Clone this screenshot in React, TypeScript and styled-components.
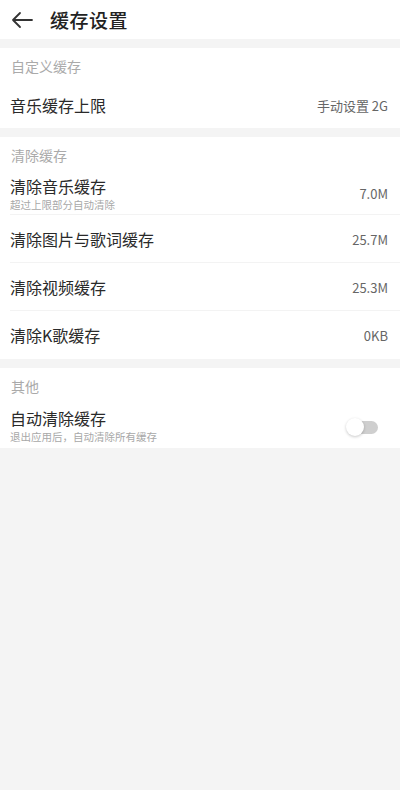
import styled, { createGlobalStyle } from 'styled-components'

const GlobalStyle = createGlobalStyle`
  html, body {
    margin: 0;
    padding: 0;
    background: #f4f4f4;
  }
  body {
    font-family: 'Noto Sans CJK SC', 'Noto Sans', sans-serif;
    -webkit-font-smoothing: antialiased;
  }
`

const Page = styled.div`
  width: 400px;
  min-height: 790px;
  background: #f4f4f4;
  display: flex;
  flex-direction: column;
  gap: 9px;
`

const Header = styled.header`
  height: 39px;
  background: #fff;
  display: flex;
  align-items: center;
  padding-left: 11px;
  gap: 17px;
`

const Title = styled.h1`
  margin: 0;
  font-size: 19px;
  font-weight: 500;
  color: #222;
  letter-spacing: 0.5px;
`

const Section = styled.section`
  background: #fff;
  display: flex;
  flex-direction: column;
`

const SectionLabel = styled.div`
  height: 34px;
  display: flex;
  align-items: center;
  padding: 1px 11px 0;
  font-size: 14px;
  color: #aaa;
  box-sizing: border-box;
`

const Row = styled.div<{ $h: number; $divider?: boolean }>`
  height: ${({ $h }) => $h}px;
  display: flex;
  align-items: center;
  justify-content: space-between;
  padding: 0 12px 0 10px;
  box-sizing: border-box;
  position: relative;
  ${({ $divider }) =>
    $divider
      ? `
    &::after {
      content: '';
      position: absolute;
      left: 10px;
      right: 0;
      bottom: 0;
      height: 1px;
      background: #f3f3f3;
    }
  `
      : ''}
`

const TextCol = styled.div`
  display: flex;
  flex-direction: column;
`

const RowTitle = styled.div`
  font-size: 16px;
  color: #2a2a2a;
  line-height: 22px;
`

const RowSub = styled.div`
  font-size: 10.5px;
  color: #a8a8a8;
  line-height: 15px;
`

const Value = styled.div`
  font-size: 13px;
  color: #666;
`

const Switch = styled.div<{ $on: boolean }>`
  width: 31px;
  height: 13px;
  border-radius: 7px;
  background: ${({ $on }) => ($on ? '#e33' : '#cfcfcf')};
  position: relative;
  margin-right: 10px;
  margin-top: 4px;

  &::before {
    content: '';
    position: absolute;
    top: 50%;
    left: ${({ $on }) => ($on ? '14px' : '-1px')};
    width: 18px;
    height: 18px;
    margin-top: -9px;
    border-radius: 50%;
    background: #fff;
    box-shadow: 0 1px 3px rgba(0, 0, 0, 0.22);
  }
`

function BackArrow() {
  return (
    <svg width="22" height="18" viewBox="0 0 22 18" fill="none">
      <path
        d="M21 9H2M9 2L2 9l7 7"
        stroke="#333"
        strokeWidth="1.8"
        strokeLinecap="round"
        strokeLinejoin="round"
      />
    </svg>
  )
}

const clearItems = [
  { title: '清除音乐缓存', sub: '超过上限部分自动清除', value: '7.0M' },
  { title: '清除图片与歌词缓存', value: '25.7M' },
  { title: '清除视频缓存', value: '25.3M' },
  { title: '清除K歌缓存', value: '0KB' },
]

export default function App() {
  return (
    <>
      <GlobalStyle />
      <Page>
        <Header>
          <BackArrow />
          <Title>缓存设置</Title>
        </Header>

        <Section>
          <SectionLabel>自定义缓存</SectionLabel>
          <Row $h={46}>
            <RowTitle>音乐缓存上限</RowTitle>
            <Value>手动设置 2G</Value>
          </Row>
        </Section>

        <Section>
          <SectionLabel>清除缓存</SectionLabel>
          {clearItems.map((item, index) => (
            <Row
              key={item.title}
              $h={item.sub ? 44 : 48}
              $divider={index < clearItems.length - 1}
            >
              <TextCol>
                <RowTitle>{item.title}</RowTitle>
                {item.sub && <RowSub>{item.sub}</RowSub>}
              </TextCol>
              <Value>{item.value}</Value>
            </Row>
          ))}
        </Section>

        <Section>
          <SectionLabel>其他</SectionLabel>
          <Row $h={46}>
            <TextCol>
              <RowTitle>自动清除缓存</RowTitle>
              <RowSub>退出应用后，自动清除所有缓存</RowSub>
            </TextCol>
            <Switch $on={false} />
          </Row>
        </Section>
      </Page>
    </>
  )
}
